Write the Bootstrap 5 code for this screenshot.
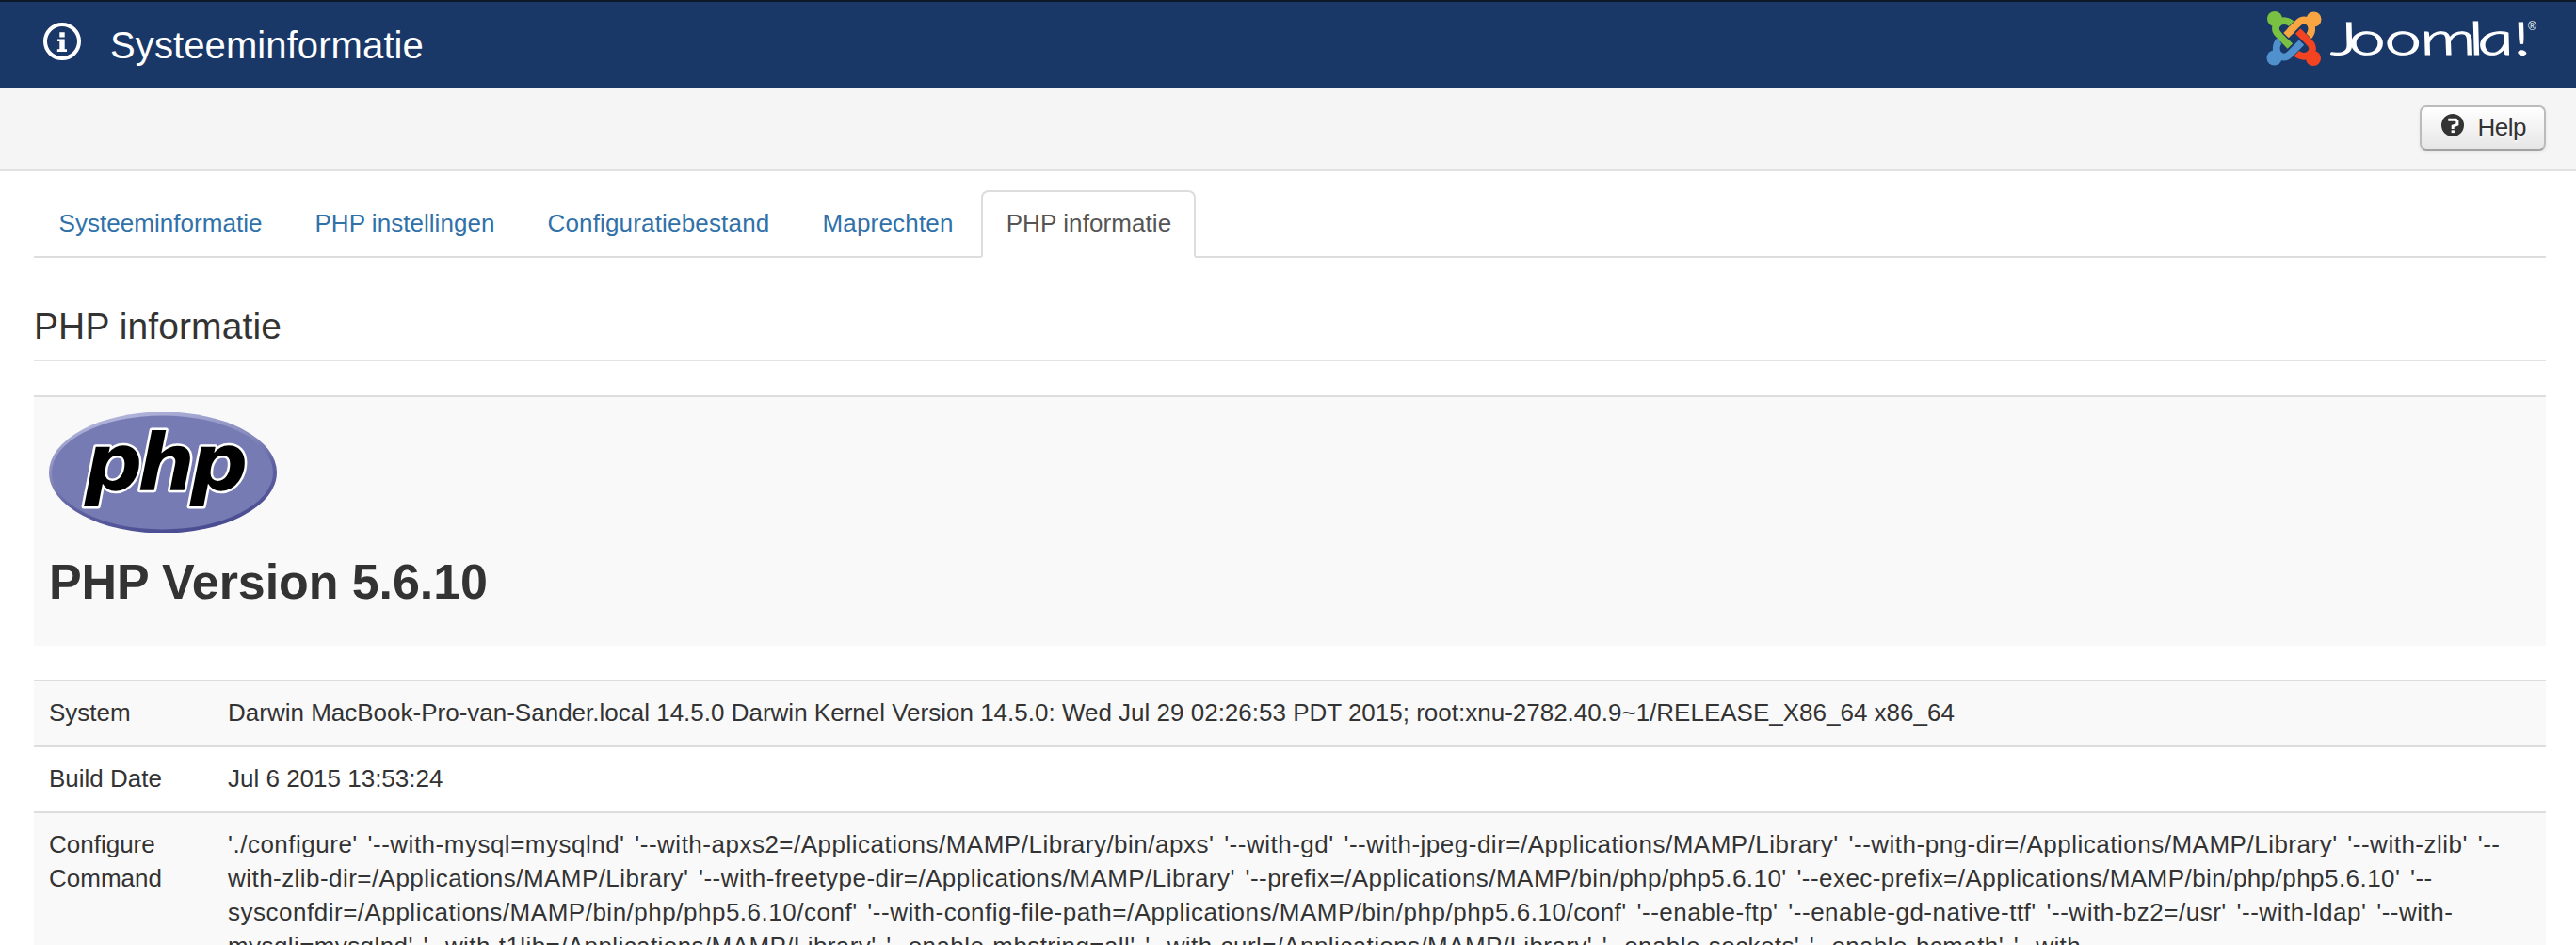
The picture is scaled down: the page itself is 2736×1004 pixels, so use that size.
<!DOCTYPE html>
<html lang="nl">
<head>
<meta charset="utf-8">
<meta name="viewport" content="width=device-width, initial-scale=1">
<title>Systeeminformatie</title>
<link href="https://cdn.jsdelivr.net/npm/bootstrap@5.3.0/dist/css/bootstrap.min.css" rel="stylesheet">
<script src="https://cdn.jsdelivr.net/npm/bootstrap@5.3.0/dist/js/bootstrap.bundle.min.js"></script>
<style>
  html, body { height: 100%; overflow: hidden; }
  body { font: 26px/36px "Liberation Sans", Arial, sans-serif; color: #333; background: #fff; }
  .page-head { height: 94px; background: #1a3867; border-top: 2px solid #0d1829; color: #fff; }
  .page-head h1 { font-size: 40px; line-height: 40px; font-weight: 400; letter-spacing: .1px; margin: 26px 0 0 31px; }
  .head-icon { width: 40px; height: 40px; margin: 22px 0 0 46px; }
  .brand-logo { width: 300px; height: 72px; margin-right: 36px; }
  .subhead { height: 88px; background: #f5f5f5; border-bottom: 2px solid #e1e1e1; padding: 18px 32px 0 0; }
  .btn-help { height: 48px; width: 134px; padding: 3px 0 5px 21px; border: 2px solid #bbb; border-bottom-color: #a2a2a2; border-radius: 7px;
    background: linear-gradient(#fff, #e6e6e6); color: #333; font-size: 26px; line-height: 36px; letter-spacing: -.5px;
    text-shadow: 0 2px 2px rgba(255,255,255,.75); box-shadow: 0 2px 4px rgba(0,0,0,.06); }
  .btn-help svg { width: 24px; height: 24px; margin: 4px 14.5px 0 0; }
  .main-area { padding: 20px 32px 0 36px; }
  .nav-tabs { border-bottom: 2px solid #ddd; --bs-nav-tabs-border-width: 2px; gap: 4px; }
  .nav-tabs .nav-link { padding: 15px 23.5px 17px 24.5px; color: #3071a9; border-radius: 8px 8px 0 0; margin-bottom: -2px; line-height: 36px; letter-spacing: .04px; }
  .nav-tabs .nav-link.active { color: #555; border-color: #ddd #ddd #fff; }
  .nav-tabs .tab-config { letter-spacing: .17px; }
  .nav-tabs .tab-map { letter-spacing: .2px; }
  .nav-tabs .tab-php { letter-spacing: .08px; }
  .section-title { font-size: 39px; line-height: 40px; font-weight: 400; letter-spacing: .1px; margin: 53px 0 36px; padding-bottom: 15px; border-bottom: 2px solid #e3e3e3; }
  .version-box { background: #f9f9f9; border-top: 2px solid #ddd; padding: 16px 16px 38px; margin-bottom: 36px; }
  .version-box svg { width: 242px; height: 128px; }
  .version-box h2 { font-size: 52px; line-height: 60px; font-weight: 700; margin: 22px 0 0; letter-spacing: -.08px; }
  .info-table { color: #333; table-layout: fixed; margin: 0; }
  .info-table > tbody > tr > td { padding: 15px 16px 17px; border: 0; border-top: 2px solid #ddd; color: #333; line-height: 36px; box-shadow: none; background: #fff; }
  .info-table > tbody > tr:nth-child(odd) > td { background: #f9f9f9; }
  .info-table td:first-child { width: 190px; }
  .cmd { white-space: nowrap; word-spacing: 3px; }
  .cmd-a { letter-spacing: .5px; }
  .cmd-b { letter-spacing: .45px; }
  .cmd-c { letter-spacing: .51px; }
  .cmd-d { letter-spacing: .41px; }
</style>
</head>
<body>
<header class="page-head d-flex align-items-start">
  <svg class="head-icon" viewBox="0 0 40 40" aria-hidden="true">
    <circle cx="20" cy="20" r="18" fill="none" stroke="#fff" stroke-width="4"/>
    <path d="M17.3 10.3h5.4v5.2h-5.4zM15 17.5h7.7v10.8h2.3v2.6H14.8v-2.6h2.5v-8.2H15z" fill="#fff"/>
  </svg>
  <h1>Systeeminformatie</h1>
  <svg class="brand-logo ms-auto" viewBox="2400 2 300 72" role="img" aria-label="Joomla!">
    <defs>
      <path id="arm" d="M104 63C90 49 72 49 61 57C47 69 48 83 60 95L97 132"/>
      <g id="limb">
        <use href="#arm" fill="none" stroke="#1a3867" stroke-width="27"/>
        <use href="#arm" fill="none" stroke="currentColor" stroke-width="23"/>
        <circle cx="48" cy="45" r="24" fill="currentColor"/>
      </g>
    </defs>
    <g transform="translate(2400 5) scale(.3333)">
      <use href="#limb" color="#7ac143"/>
      <use href="#limb" color="#f9a541" transform="rotate(90 109.5 108)"/>
      <use href="#limb" color="#f44321" transform="rotate(180 109.5 108)"/>
      <use href="#limb" color="#5091cd" transform="rotate(270 109.5 108)"/>
      <path d="M74 109L97 132" stroke="#1a3867" stroke-width="27"/>
      <path d="M72 107L97 132" stroke="#7ac143" stroke-width="23"/>
      <path d="M81 101L97 85" stroke="#1a3867" stroke-width="27"/>
      <path d="M84 98L104 78" stroke="#f9a541" stroke-width="23"/>
    </g>
    <text transform="translate(0 57.8) scale(1.6 1) skewX(8)" x="1548.5 1561 1584.8 1608.5 1640.8 1646.6 1670.2" y="0" font-family="Lato, sans-serif" font-weight="300" font-style="italic" font-size="48" fill="#fff" stroke="#fff" stroke-width="1.1">Joomla!</text>
    <text x="2685" y="32" font-family="Liberation Sans, sans-serif" font-size="12" fill="#fff">®</text>
  </svg>
</header>
<div class="subhead d-flex justify-content-end">
  <button type="button" class="btn btn-help d-flex align-items-start">
    <svg viewBox="0 0 24 24" aria-hidden="true"><circle cx="12" cy="12" r="12" fill="#333"/><path d="M7.3 6.3h8.2l1.4 1.4v3.6l-4.7 1.8v3" fill="none" stroke="#fff" stroke-width="3"/><path d="M10.6 17.3h3.3v2.8h-3.3z" fill="#fff"/></svg>Help
  </button>
</div>
<main class="main-area">
  <ul class="nav nav-tabs">
    <li class="nav-item"><a class="nav-link" href="#">Systeeminformatie</a></li>
    <li class="nav-item"><a class="nav-link" href="#">PHP instellingen</a></li>
    <li class="nav-item"><a class="nav-link tab-config" href="#">Configuratiebestand</a></li>
    <li class="nav-item"><a class="nav-link tab-map" href="#">Maprechten</a></li>
    <li class="nav-item"><a class="nav-link tab-php active" href="#">PHP informatie</a></li>
  </ul>
  <h2 class="section-title">PHP informatie</h2>
  <section class="version-box">
    <svg class="d-block" viewBox="52 438 242 128" role="img" aria-label="PHP">
      <defs>
        <linearGradient id="rim" x1=".3" y1="0" x2=".7" y2="1">
          <stop offset="0" stop-color="#b4b7dc"/><stop offset=".4" stop-color="#8185ba"/><stop offset=".6" stop-color="#5f62a2"/><stop offset="1" stop-color="#484a90"/>
        </linearGradient>
      </defs>
      <ellipse cx="173" cy="502" rx="121" ry="64.5" fill="url(#rim)"/>
      <ellipse cx="172.5" cy="502" rx="117.5" ry="60.5" fill="#777bb3"/>
      <text x="90" y="520.5" font-family="DejaVu Sans, sans-serif" font-weight="700" font-style="oblique" font-size="84" letter-spacing="-5" textLength="168" lengthAdjust="spacingAndGlyphs" fill="#000" stroke="#fff" stroke-width="5" stroke-linejoin="round" paint-order="stroke">php</text>
    </svg>
    <h2>PHP Version 5.6.10</h2>
  </section>
  <table class="table info-table">
    <tbody>
      <tr><td>System</td><td>Darwin MacBook-Pro-van-Sander.local 14.5.0 Darwin Kernel Version 14.5.0: Wed Jul 29 02:26:53 PDT 2015; root:xnu-2782.40.9~1/RELEASE_X86_64 x86_64</td></tr>
      <tr><td>Build Date</td><td>Jul 6 2015 13:53:24</td></tr>
      <tr><td>Configure Command</td><td class="cmd"><span class="cmd-a">'./configure' '--with-mysql=mysqlnd' '--with-apxs2=/Applications/MAMP/Library/bin/apxs' '--with-gd' '--with-jpeg-dir=/Applications/MAMP/Library' '--with-png-dir=/Applications/MAMP/Library' '--with-zlib' '--</span><br><span class="cmd-b">with-zlib-dir=/Applications/MAMP/Library' '--with-freetype-dir=/Applications/MAMP/Library' '--prefix=/Applications/MAMP/bin/php/php5.6.10' '--exec-prefix=/Applications/MAMP/bin/php/php5.6.10' '--</span><br><span class="cmd-c">sysconfdir=/Applications/MAMP/bin/php/php5.6.10/conf' '--with-config-file-path=/Applications/MAMP/bin/php/php5.6.10/conf' '--enable-ftp' '--enable-gd-native-ttf' '--with-bz2=/usr' '--with-ldap' '--with-</span><br><span class="cmd-d">mysqli=mysqlnd' '--with-t1lib=/Applications/MAMP/Library' '--enable-mbstring=all' '--with-curl=/Applications/MAMP/Library' '--enable-sockets' '--enable-bcmath' '--with-</span></td></tr>
    </tbody>
  </table>
</main>
</body>
</html>
